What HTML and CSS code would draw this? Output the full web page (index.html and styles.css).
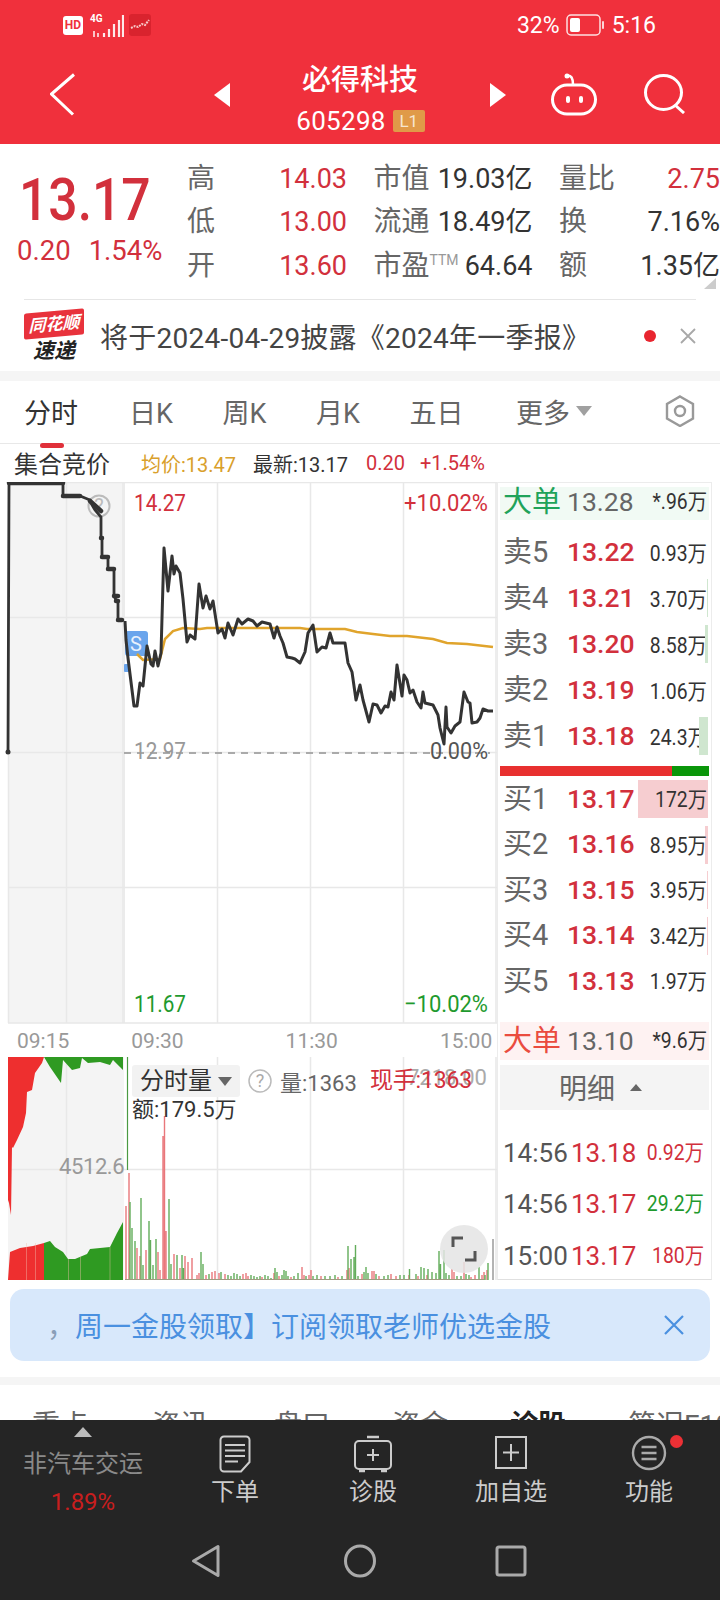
FILE: index.html
```html
<!DOCTYPE html>
<html>
<head>
    <meta charset="utf-8">
    <title>必得科技</title>
    <link rel="stylesheet" href="styles.css">
</head>
<body>
<div class="page">
    <header class="top">
        <div class="status">
            <div class="status-left">
                <span class="hd">HD</span>
                <svg class="signal" width="34" height="24" viewBox="0 0 34 24">
                    <g fill="none" stroke="#fff" stroke-width="2.2" opacity=".9">
                        <path d="M14 24v-4M19 24v-8M24 24v-13M29 24v-17M33 24v-22"/>
                        <path d="M4 18v6M8 20v4" stroke-width="1.6"/>
                    </g>
                </svg>
                <span class="g4">4G</span>
                <svg class="app-mini" width="22" height="22" viewBox="0 0 22 22">
                    <rect width="22" height="22" rx="3" fill="#d9232e"/>
                    <path d="M2 14l4-2 3 1 4-3 3 1 4-5" fill="none" stroke="#f9c9c9" stroke-width="2" stroke-dasharray="2 1"/>
                </svg>
            </div>
            <div class="status-right">
                <span>32%</span>
                <svg width="38" height="22" viewBox="0 0 38 22">
                    <rect x="1" y="1" width="33" height="20" rx="4" fill="none" stroke="#fff" stroke-width="1.5" opacity=".85"/>
                    <rect x="4" y="4" width="10" height="14" rx="2" fill="#fff"/>
                    <rect x="36" y="7" width="2" height="8" rx="1" fill="#fff" opacity=".8"/>
                </svg>
                <span class="clock">5:16</span>
            </div>
        </div>
        <div class="nav">
            <svg class="nav-back" width="26" height="43" viewBox="0 0 26 43">
                <path d="M24 1.500L1.500 21 23 41.500" fill="none" stroke="#fff" stroke-width="3"/>
            </svg>
            <svg class="nav-prev" width="16" height="24" viewBox="0 0 16 24"><path d="M16 0V24L0 12z" fill="#fff"/></svg>
            <div class="nav-title">
                <div class="stock-name">必得科技</div>
                <div class="stock-code">605298<span class="level">L1</span></div>
            </div>
            <svg class="nav-next" width="16" height="24" viewBox="0 0 16 24"><path d="M0 0V24L16 12z" fill="#fff"/></svg>
            <svg class="nav-robot" width="46" height="44" viewBox="0 0 46 44">
                <rect x="1.500" y="13" width="43" height="29" rx="14.500" fill="none" stroke="#fff" stroke-width="3"/>
                <path d="M17 3.500c4 0 5 4 5 9" fill="none" stroke="#fff" stroke-width="2.500"/>
                <circle cx="16" cy="4" r="2.500" fill="#fff"/>
                <rect x="15" y="24" width="4" height="7" rx="2" fill="#fff"/>
                <rect x="28" y="24" width="4" height="7" rx="2" fill="#fff"/>
            </svg>
            <svg class="nav-search" width="42" height="40" viewBox="0 0 42 40">
                <ellipse cx="19.500" cy="18.500" rx="18" ry="17" fill="none" stroke="#fff" stroke-width="3"/>
                <path d="M31 31l9 8" fill="none" stroke="#fff" stroke-width="3"/>
            </svg>
        </div>
    </header>

    <section class="quote">
        <div class="quote-main">
            <div class="last-price">13.17</div>
            <div class="last-change"><span>0.20</span><span>1.54%</span></div>
        </div>
        <div class="stats">
            <div class="stat"><span class="stat-label">高</span><span class="red">14.03</span></div>
            <div class="stat"><span class="stat-label">市值</span><span>19.03亿</span></div>
            <div class="stat"><span class="stat-label">量比</span><span class="red">2.75</span></div>
            <div class="stat"><span class="stat-label">低</span><span class="red">13.00</span></div>
            <div class="stat"><span class="stat-label">流通</span><span>18.49亿</span></div>
            <div class="stat"><span class="stat-label">换</span><span>7.16%</span></div>
            <div class="stat"><span class="stat-label">开</span><span class="red">13.60</span></div>
            <div class="stat"><span class="stat-label">市盈<sup class="ttm">TTM</sup></span><span>64.64</span></div>
            <div class="stat"><span class="stat-label">额</span><span>1.35亿</span></div>
        </div>
        <span class="corner"></span>
    </section>

    <section class="notice">
        <div class="notice-inner">
            <div class="logo">
                <div class="logo-top">同花顺</div>
                <div class="logo-bottom">速递</div>
            </div>
            <div class="notice-text">将于2024-04-29披露《2024年一季报》</div>
            <span class="notice-dot"></span>
            <svg width="16" height="16" viewBox="0 0 16 16"><path d="M1 1l14 14M15 1L1 15" stroke="#a8a8a8" stroke-width="1.800"/></svg>
        </div>
    </section>

    <div class="band"></div>

    <nav class="tabs">
        <span class="tab tab-on">分时</span>
        <span class="tab">日K</span>
        <span class="tab">周K</span>
        <span class="tab">月K</span>
        <span class="tab">五日</span>
        <span class="tab tab-more">更多<i class="caret"></i></span>
        <svg class="tab-set" width="32" height="32" viewBox="0 0 32 32">
            <path d="M16 1.500L29 9V23.500L16 31 3 23.500V9z" fill="none" stroke="#999" stroke-width="2.400"/>
            <circle cx="16" cy="16" r="5" fill="none" stroke="#999" stroke-width="2.400"/>
        </svg>
    </nav>

    <div class="sub-head">
        <span class="auction">集合竞价</span>
        <span class="avg">均价:13.47</span>
        <span class="latest">最新:13.17</span>
        <span class="sub-red sub-chg">0.20</span>
        <span class="sub-red sub-pct">+1.54%</span>
    </div>

    <div class="market">
        <div class="plot">
            <svg class="price-svg" width="497" height="542" viewBox="0 482 497 542">
                <rect x="8" y="482" width="116" height="541" fill="#f4f4f4"/>
                <rect x="122" y="482" width="3" height="541" fill="#ebebeb"/>
                <path d="M8 482.500H497M8 617.500H497M8 752.500H497M8 887.500H497M8 1023H497M66.500 482V1023M217.500 482V1023M310.500 482V1023M403.500 482V1023M496 482V1023M8.500 752V1023" fill="none" stroke="#e8e8e8" stroke-width="1.500"/>
                <path d="M124 753H490" fill="none" stroke="#aaa" stroke-width="2" stroke-dasharray="7 6"/>
                <circle cx="99" cy="506" r="10.500" fill="none" stroke="#bbb" stroke-width="2"/>
                <text class="t-help" x="99" y="513" text-anchor="middle">?</text>
                <rect x="125" y="631" width="23" height="25" rx="3" fill="#6aa5ec"/>
                <rect x="124" y="664" width="5" height="8" rx="1" fill="#6aa5ec"/>
                <text class="t-s" x="136" y="651" text-anchor="middle">S</text>
                <path class="avg-line" d="M137 654L143 660 160 659 165 639 173 631 183 628 200 629 207 628H300L307 629H345L357 632 373 634 390 636H407L433 639 447 643 467 644 493 647"/>
                <path class="step-line" d="M8 752L9 483H63V496H80L85 498 90 500 92 505 95 510 101 517V538H102V557H106L108 558V569H113L114 571V596L116 600 118 601V620H122"/>
                <path class="heavy" d="M9 483H63M63 496H80M90 501l11 10M101 538h1M102 557h6M108 569h6M114 596h4M116 601h2M118 620h4"/>
                <circle cx="8" cy="752" r="2.500" fill="#333"/>
                <path class="price-line" d="M125 621L126 640 128 658 134 706H137L140 683 143 686 147 646 151 664 153 666 155 651 158 666 161 653 164 548 168 591 172 556 174 574 176 566 180 573 183 599 187 642 190 635 195 639 199 584 203 608 206 596 210 609 213 601 218 633 222 629 225 638 228 623 233 635 238 619 242 624 248 619 253 621 257 626 262 622 270 624 274 638 277 627 280 636 283 643 287 657 292 658 295 659 300 663 305 652 308 633 313 625 317 652 322 647 326 648 330 633 333 643H345L348 663 352 672 356 700 360 685 363 700 369 722 373 704 377 705 381 713 385 706 388 707 391 692 394 700 397 665 402 696 404 675 407 680 410 693 413 690 417 702 421 708 423 692 425 703 433 705 438 715 440 728 444 744 446 707 447 727 451 733 455 726 460 722 464 692 468 702 470 703 472 723 477 722 480 718 483 709 488 711H493"/>
                <text class="t-num t-red" x="134" y="511" textLength="52" lengthAdjust="spacingAndGlyphs">14.27</text>
                <text class="t-num t-red" x="404" y="511" textLength="84" lengthAdjust="spacingAndGlyphs">+10.02%</text>
                <text class="t-num t-gray" x="134" y="759" textLength="52" lengthAdjust="spacingAndGlyphs">12.97</text>
                <text class="t-num t-dark" x="430" y="759" textLength="58" lengthAdjust="spacingAndGlyphs">0.00%</text>
                <text class="t-num t-green" x="134" y="1012" textLength="52" lengthAdjust="spacingAndGlyphs">11.67</text>
                <text class="t-num t-green" x="404" y="1012" textLength="84" lengthAdjust="spacingAndGlyphs">−10.02%</text>
            </svg>
            <div class="time-axis">
                <span>09:15</span><span>09:30</span><span>11:30</span><span>15:00</span>
            </div>
            <div class="volume">
                <svg width="497" height="223" viewBox="0 1057 497 223">
                    <rect x="8" y="1057" width="116" height="223" fill="#f4f4f4"/>
                    <path d="M8 1169.500H497M66.500 1057V1280M217.500 1057V1280M310.500 1057V1280M403.500 1057V1280M496 1057V1280" fill="none" stroke="#e8e8e8" stroke-width="1.500"/>
                    <path d="M8 1057H44L42 1063 35 1073 32 1090 27 1092 26 1113 23 1127 17 1140 13 1148 12 1147 11 1215 9 1203 8 1200z" fill="#ee2f2f"/>
                    <path d="M44 1057L50 1067 61 1083 63 1060 72 1070 80 1068 82 1058 88 1063 100 1062 110 1065 113 1060 120 1067 123 1070V1057z" fill="#2f9a22"/>
                    <path d="M8 1280L10 1252 20 1248 33 1246 44 1243V1280z" fill="#ee2f2f"/>
                    <path d="M44 1243L50 1241 55 1247 63 1252 68 1259H75L87 1254 90 1249 110 1247 117 1233 123 1222V1280H44z" fill="#2f9a22"/>
                    <path d="M26.500 1243V1280M35.500 1243V1280M68.500 1259V1280M80.500 1256V1280M110 1247V1280" stroke="#f4c0b0" stroke-width=".6" fill="none" opacity=".7"/>
                    <path d="M127.500 1057V1170" stroke="#4a9a42" stroke-width="1.200"/>
                    <path class="bars-red" d="M126 1280V1206M129 1280V1173M137 1280V1248M140 1280V1256M146 1280V1250M158 1280V1252M160 1280V1270M163 1280V1136M164.500 1280V1116M166 1280V1231M174 1280V1254M180 1280V1268M185 1280V1256M188 1280V1262M192 1280V1258M197 1280V1275M199 1280V1273M206 1280V1275M212 1280V1272M215 1280V1271M219 1280V1273M225 1280V1274M243 1280V1274M246 1280V1273M248 1280V1276M262 1280V1277M274 1280V1273M279 1280V1276M291 1280V1277M302 1280V1267M304 1280V1275M309 1280V1275M311 1280V1270M321 1280V1276M338 1280V1277M347 1280V1270M349 1280V1268M362 1280V1274M372 1280V1271M374 1280V1271M379 1280V1276M391 1280V1274M396 1280V1276M409 1280V1275M418 1280V1276M427 1280V1275M452 1280V1269M454 1280V1272M464 1280V1262M471 1280V1277M475 1280V1275M482 1280V1275M484 1280V1272M487 1280V1270"/>
                    <path class="bars-green" d="M130 1280V1202M132 1280V1228M135 1280V1241M141 1280V1198M143 1280V1265M149 1280V1221M150.500 1280V1240M153 1280V1265M156 1280V1239M169 1280V1199M171 1280V1264M177 1280V1255M182 1280V1255M183.500 1280V1268M201 1280V1252M203 1280V1264M209 1280V1274M221 1280V1272M228 1280V1275M231 1280V1276M234 1280V1273M237 1280V1274M240 1280V1276M251 1280V1275M254 1280V1276M257 1280V1277M260 1280V1276M265 1280V1275M268 1280V1276M271 1280V1278M275 1280V1268M277 1280V1272M282 1280V1275M284 1280V1270M286 1280V1271M288 1280V1276M294 1280V1276M298 1280V1273M306 1280V1276M313 1280V1276M317 1280V1275M325 1280V1276M330 1280V1276M335 1280V1275M342 1280V1276M351 1280V1259M354 1280V1257M355.500 1280V1245M348 1280V1246M358 1280V1276M364 1280V1272M366 1280V1267M368 1280V1273M376 1280V1274M384 1280V1276M388 1280V1275M400 1280V1275M404 1280V1275M409.500 1280V1269M416 1280V1274M421 1280V1267M424 1280V1268M428 1280V1269M432 1280V1272M436 1280V1273M439 1280V1251M440.500 1280V1264M444 1280V1250M446 1280V1273M449 1280V1275M457 1280V1276M461 1280V1276M466 1280V1274M469 1280V1275M479 1280V1267M485 1280V1275M488 1280V1263"/>
                    <path d="M493 1280V1239" stroke="#8a8a8a" stroke-width="1.300"/>
                    <path d="M125 1279.500H484" stroke="#a09a80" stroke-width="1"/>
                </svg>
                <span class="vol-side">4512.6</span>
                <div class="vol-legend">
                    <span class="vol-select">分时量<i class="vol-caret"></i></span>
                    <svg width="24" height="24" viewBox="0 0 24 24">
                        <circle cx="12" cy="12" r="11" fill="none" stroke="#bbb" stroke-width="1.500"/>
                        <text class="t-help2" x="12" y="18" text-anchor="middle">?</text>
                    </svg>
                    <span class="vol-now">量:1363</span>
                </div>
                <span class="vol-max">7218.00</span>
                <span class="vol-hand">现手:1363</span>
                <span class="vol-amount">额:179.5万</span>
                <span class="expand">
                    <svg width="26" height="26" viewBox="0 0 26 26">
                        <path d="M2 11V2H12M24 15V24H14" fill="none" stroke="#555" stroke-width="3"/>
                    </svg>
                </span>
            </div>
        </div>

        <aside class="depth">
            <div class="big big-up"><span class="big-name">大单</span><span class="big-price">13.28</span><span class="d-vol">*.96万</span></div>
            <div class="levels">
                <div class="level-row"><span class="d-name">卖5</span><span class="d-price">13.22</span><span class="d-vol">0.93万</span></div>
                <div class="level-row"><span class="d-name">卖4</span><span class="d-price">13.21</span><span class="d-vol">3.70万</span><i class="d-bar d-bar-sell" style="width:1px"></i></div>
                <div class="level-row"><span class="d-name">卖3</span><span class="d-price">13.20</span><span class="d-vol">8.58万</span><i class="d-bar d-bar-sell" style="width:3px"></i></div>
                <div class="level-row"><span class="d-name">卖2</span><span class="d-price">13.19</span><span class="d-vol">1.06万</span></div>
                <div class="level-row"><span class="d-name">卖1</span><span class="d-price">13.18</span><span class="d-vol">24.3万</span><i class="d-bar d-bar-sell" style="width:9px"></i></div>
            </div>
            <div class="ratio"><i class="ratio-buy" style="width:172px"></i></div>
            <div class="levels">
                <div class="level-row buy-row"><i class="d-bar d-bar-buy" style="width:70px"></i><span class="d-name">买1</span><span class="d-price">13.17</span><span class="d-vol">172万</span></div>
                <div class="level-row buy-row"><i class="d-bar d-bar-buy" style="width:3px"></i><span class="d-name">买2</span><span class="d-price">13.16</span><span class="d-vol">8.95万</span></div>
                <div class="level-row buy-row"><i class="d-bar d-bar-buy" style="width:1px"></i><span class="d-name">买3</span><span class="d-price">13.15</span><span class="d-vol">3.95万</span></div>
                <div class="level-row buy-row"><i class="d-bar d-bar-buy" style="width:1px"></i><span class="d-name">买4</span><span class="d-price">13.14</span><span class="d-vol">3.42万</span></div>
                <div class="level-row buy-row"><span class="d-name">买5</span><span class="d-price">13.13</span><span class="d-vol">1.97万</span></div>
            </div>
            <div class="big big-down"><span class="big-name">大单</span><span class="big-price">13.10</span><span class="d-vol">*9.6万</span></div>
            <div class="detail-head">明细<i class="detail-caret"></i></div>
            <div class="detail-list">
                <div class="detail-row"><span class="dt-time">14:56</span><span class="dt-price">13.18</span><span class="dt-vol">0.92万</span></div>
                <div class="detail-row"><span class="dt-time">14:56</span><span class="dt-price">13.17</span><span class="dt-vol dt-green">29.2万</span></div>
                <div class="detail-row"><span class="dt-time">15:00</span><span class="dt-price">13.17</span><span class="dt-vol">180万</span></div>
            </div>
        </aside>
    </div>

    <section class="promo">
        <div class="promo-text"><span class="promo-fade">，</span>周一金股领取】订阅领取老师优选金股</div>
        <svg width="20" height="20" viewBox="0 0 20 20"><path d="M1 1l18 18M19 1L1 19" stroke="#4a90e0" stroke-width="2.200"/></svg>
    </section>

    <div class="band band-low"></div>

    <nav class="info-tabs">
        <span class="info-a">重点</span>
        <span class="info-b">资讯</span>
        <span class="info-c">盘口</span>
        <span class="info-d">资金</span>
        <span class="info-e">诊股</span>
        <span class="info-f">简况F10</span>
    </nav>

    <footer class="dock">
        <div class="dock-row">
            <div class="dock-sector">
                <i class="sector-up"></i>
                <div class="sector-name">非汽车交运</div>
                <div class="sector-pct">1.89%</div>
            </div>
            <div class="dock-item">
                <svg width="32" height="38" viewBox="0 0 32 38">
                    <path d="M5 1.500H27a3.500 3.500 0 0 1 3.500 3.500V27L22 36.500H5A3.500 3.500 0 0 1 1.500 33V5A3.500 3.500 0 0 1 5 1.500z" fill="none" stroke="#ccc" stroke-width="2"/>
                    <path d="M6 10H26M6 15.500H26M6 21H26M6 26.500H19" stroke="#ccc" stroke-width="2"/>
                </svg>
                <span>下单</span>
            </div>
            <div class="dock-item">
                <svg width="38" height="38" viewBox="0 0 38 38">
                    <rect x="1" y="6" width="36" height="28" rx="4" fill="none" stroke="#ccc" stroke-width="2"/>
                    <path d="M13 2H25M5 36H11M27 36H33" stroke="#ccc" stroke-width="2.500"/>
                    <path d="M19 14V26M13 20H25" stroke="#ccc" stroke-width="2"/>
                </svg>
                <span>诊股</span>
            </div>
            <div class="dock-item">
                <svg width="38" height="38" viewBox="0 0 38 38">
                    <rect x="4" y="2" width="30" height="31" fill="none" stroke="#ccc" stroke-width="2"/>
                    <path d="M19 9V26M11 17.500H27" stroke="#ccc" stroke-width="2"/>
                </svg>
                <span>加自选</span>
            </div>
            <div class="dock-item dock-fn">
                <svg width="38" height="38" viewBox="0 0 38 38">
                    <ellipse cx="19" cy="18" rx="16" ry="16" fill="none" stroke="#aaa" stroke-width="2.400"/>
                    <path d="M11.500 12H26.500M11.500 18H26.500M11.500 24H26.500" stroke="#aaa" stroke-width="2.600"/>
                </svg>
                <span>功能</span>
                <i class="fn-dot"></i>
            </div>
        </div>
        <div class="sys-nav">
            <svg width="30" height="34" viewBox="0 0 30 34"><path d="M27 2.500V31.500L2.500 17z" fill="none" stroke="#aaa" stroke-width="3" stroke-linejoin="round"/></svg>
            <svg class="sys-home" width="32" height="34" viewBox="0 0 32 34"><ellipse cx="16" cy="17" rx="14.500" ry="15" fill="none" stroke="#aaa" stroke-width="3"/></svg>
            <svg width="32" height="32" viewBox="0 0 32 32"><rect x="2" y="2" width="28" height="28" rx="2" fill="none" stroke="#aaa" stroke-width="3"/></svg>
        </div>
    </footer>
</div>
</body>
</html>
```

FILE: styles.css
```css
* {
    box-sizing: border-box;
}

html, body {
    margin: 0;
    padding: 0;
}

body {
    font-family: Roboto, "Noto Sans CJK SC", sans-serif;
    background-color: #fff;
    color: #333;
}

i {
    display: block;
}

.page {
    width: 720px;
    height: 1600px;
    overflow: hidden;
}

.red {
    color: #d2303c;
}

/* header */
.top {
    height: 144px;
    background-color: #f0303c;
    color: #fff;
}

.status {
    height: 50px;
    display: flex;
    align-items: center;
    justify-content: space-between;
    padding: 0 64px 0 63px;
    font-size: 23px;
}

.status-left {
    display: flex;
    align-items: center;
    position: relative;
}

.hd {
    width: 20px;
    height: 19px;
    background-color: #fff;
    color: #f0303c;
    border-radius: 3px;
    font-size: 12px;
    font-weight: 700;
    line-height: 19px;
    text-align: center;
    margin-right: 7px;
}

.g4 {
    position: absolute;
    left: 27px;
    top: 0;
    font-size: 10px;
    font-weight: 700;
    line-height: 12px;
}

.app-mini {
    margin-left: 5px;
}

.status-right {
    display: flex;
    align-items: center;
    gap: 6px;
}

.clock {
    margin-left: 2px;
}

.nav {
    height: 94px;
    display: flex;
    align-items: center;
}

.nav-back {
    margin: -6px 0 0 50px;
}

.nav-prev {
    margin: -4px 0 0 138px;
}

.nav-title {
    width: 260px;
    text-align: center;
    margin-top: 5px;
}

.stock-name {
    font-size: 29px;
    font-weight: 500;
    line-height: 40px;
}

.stock-code {
    font-size: 26px;
    letter-spacing: .3px;
    line-height: 36px;
    margin-top: 3px;
    display: flex;
    align-items: center;
    justify-content: center;
    padding-left: 1px;
}

.level {
    width: 32px;
    height: 22px;
    margin-left: 7px;
    background-color: #e09a48;
    border-radius: 2px;
    font-size: 17px;
    letter-spacing: 0;
    line-height: 22px;
    color: #f7e6d0;
}

.nav-next {
    margin-top: -4px;
}

.nav-robot {
    margin: -6px 0 0 45px;
}

.nav-search {
    margin: -6px 0 0 47px;
}

/* quote */
.quote {
    height: 155px;
    display: flex;
    position: relative;
}

.quote-main {
    width: 187px;
    padding-left: 17px;
}

.last-price {
    font-size: 59px;
    line-height: 60px;
    margin: 26px 0 0 2px;
    color: #d2303c;
    font-weight: 500;
    transform: scaleX(.875);
    transform-origin: left center;
    white-space: nowrap;
}

.last-change {
    display: flex;
    gap: 18px;
    font-size: 27.500px;
    line-height: 34px;
    margin-top: 4px;
    color: #d2303c;
}

.stats {
    display: grid;
    grid-template-columns: 160px 159px 161px;
    grid-auto-rows: 43.5px;
    column-gap: 26.500px;
    padding-top: 13px;
    font-size: 27px;
    white-space: nowrap;
}

.stat {
    display: flex;
    justify-content: space-between;
    align-items: center;
}

.stat span {
    line-height: 32px;
}

.stat-label {
    color: #666;
    font-size: 28px;
}

.ttm {
    font-size: 14px;
    color: #999;
    vertical-align: 10px;
    line-height: 0;
}

.corner {
    position: absolute;
    right: 4px;
    top: 134px;
    width: 0;
    height: 0;
    border-left: 12px solid transparent;
    border-bottom: 11px solid #ccc;
}

/* notice row */
.notice {
    height: 72px;
    padding: 0 24px;
}

.notice-inner {
    height: 72px;
    border-top: 1px solid #e6e6e6;
    display: flex;
    align-items: center;
}

.logo {
    width: 60px;
    text-align: center;
    font-style: italic;
    font-weight: 700;
    margin-top: 3px;
}

.logo-top {
    height: 26px;
    background-color: #e8323c;
    color: #fff;
    font-size: 17px;
    line-height: 26px;
    border-radius: 2px;
    transform: skewY(-5deg);
    white-space: nowrap;
}

.logo-bottom {
    font-size: 21px;
    line-height: 26px;
    color: #222;
    margin-top: 1px;
}

.notice-text {
    flex: 1;
    margin-left: 16px;
    font-size: 28px;
    letter-spacing: .25px;
    color: #444;
    white-space: nowrap;
}

.notice-dot {
    width: 12px;
    height: 12px;
    border-radius: 50%;
    background-color: #e8252f;
    margin-right: 24px;
}

.band {
    height: 10px;
    background-color: #f5f5f5;
}

/* period tabs */
.tabs {
    height: 63px;
    border-bottom: 1px solid #e8e8e8;
    position: relative;
    display: flex;
    align-items: center;
    padding: 0 0 2px 24px;
    font-size: 27px;
    color: #666;
}

.tab {
    width: 93.500px;
    white-space: nowrap;
    padding-left: 0;
}

.tab:first-child {
    width: 105px;
}

.tab-on {
    color: #333;
    position: relative;
}

.tab-on::after {
    content: "";
    position: absolute;
    left: 16px;
    bottom: -17px;
    width: 24px;
    height: 5px;
    border-radius: 3px;
    background-color: #e0303a;
}

.tab-more {
    display: flex;
    align-items: center;
    margin-left: 13px;
}

.caret {
    width: 0;
    height: 0;
    margin-left: 6px;
    border-left: 8px solid transparent;
    border-right: 8px solid transparent;
    border-top: 10px solid #a0a0a0;
}

.tab-set {
    position: absolute;
    left: 664px;
    top: 14px;
}

/* sub heading */
.sub-head {
    height: 38px;
    display: flex;
    align-items: center;
    font-size: 20px;
    white-space: nowrap;
}

.auction {
    font-size: 24px;
    margin: -2px 0 0 14px;
    width: 127px;
}

.avg {
    color: #d9a02b;
    width: 112px;
}

.latest {
    color: #333;
    width: 113px;
}

.sub-red {
    color: #d2303c;
}

.sub-chg {
    width: 54px;
}

/* chart + order book */
.market {
    display: flex;
    height: 798px;
}

.plot {
    width: 497px;
}

.price-svg {
    display: block;
}

.avg-line {
    fill: none;
    stroke: #e0a42c;
    stroke-width: 2.5;
}

.step-line {
    fill: none;
    stroke: #333;
    stroke-width: 2.8;
}

.heavy {
    fill: none;
    stroke: #333;
    stroke-width: 4.5;
    stroke-linecap: round;
}

.price-line {
    fill: none;
    stroke: #333;
    stroke-width: 3;
    stroke-linejoin: round;
}

.t-num {
    font-size: 24px;
}

.t-red {
    fill: #d2303c;
}

.t-green {
    fill: #1f9a2e;
}

.t-gray {
    fill: #999;
}

.t-dark {
    fill: #555;
}

.t-help {
    font-size: 20px;
    fill: #bbb;
}

.t-help2 {
    font-size: 18px;
    fill: #aaa;
}

.t-s {
    font-size: 20px;
    fill: #e8f1fc;
}

.time-axis {
    height: 33px;
    display: flex;
    align-items: center;
    gap: 102px;
    padding-left: 17px;
    font-size: 21px;
    color: #999;
}

.time-axis span:first-child {
    margin-right: -40px;
}

.volume {
    position: relative;
    height: 223px;
}

.volume svg {
    display: block;
}

.bars-red {
    fill: none;
    stroke: #e9777b;
    stroke-width: 1.4;
}

.bars-green {
    fill: none;
    stroke: #63ad5b;
    stroke-width: 1.4;
}

.vol-side {
    position: absolute;
    left: 59px;
    top: 96px;
    font-size: 22px;
    letter-spacing: -.4px;
    line-height: 28px;
    color: #999;
}

.vol-legend {
    position: absolute;
    left: 132px;
    top: 8px;
    display: flex;
    align-items: center;
    gap: 8px;
    font-size: 22px;
    white-space: nowrap;
}

.vol-select {
    width: 108px;
    height: 32px;
    background-color: #f2f2f2;
    border-radius: 3px;
    padding-left: 8px;
    font-size: 24px;
    line-height: 32px;
    color: #333;
    display: flex;
    align-items: center;
}

.vol-caret {
    margin-left: 6px;
    width: 0;
    height: 0;
    border-left: 7px solid transparent;
    border-right: 7px solid transparent;
    border-top: 9px solid #666;
}

.vol-now {
    color: #666;
}

.vol-max {
    position: absolute;
    right: 10px;
    top: 7px;
    font-size: 22px;
    line-height: 27px;
    color: #aaa;
}

.vol-hand {
    position: absolute;
    left: 370px;
    top: 10px;
    font-size: 23px;
    letter-spacing: -.2px;
    line-height: 28px;
    color: #d2303c;
    white-space: nowrap;
}

.vol-amount {
    position: absolute;
    left: 132px;
    top: 39px;
    font-size: 22px;
    line-height: 27px;
    color: #333;
    white-space: nowrap;
}

.expand {
    position: absolute;
    left: 440px;
    top: 168px;
    width: 48px;
    height: 48px;
    border-radius: 50%;
    background-color: rgba(228, 228, 228, .85);
    display: flex;
    align-items: center;
    justify-content: center;
}

/* order book */
.depth {
    width: 215px;
    border: 1px solid #ececec;
    border-bottom-color: #e0e0e0;
    overflow: hidden;
}

.big {
    height: 33px;
    margin: 4px 2px 0 2px;
    display: flex;
    align-items: center;
    padding: 0 0 4px 3px;
    position: relative;
}

.big-up {
    background-color: #f1faf4;
}

.big-up .big-name {
    color: #1fa35a;
}

.big-down {
    height: 38px;
    margin-top: 18.500px;
    padding-bottom: 0;
    background-color: #fef2f2;
}

.big-down .big-name {
    color: #ea4c3f;
}

.big-name {
    font-size: 29px;
    line-height: 32px;
    width: 64px;
}

.big-price {
    font-size: 26.500px;
    line-height: 32px;
    color: #666;
}

.levels {
    margin-top: 9px;
}

.ratio + .levels {
    margin-top: 0;
}

.level-row {
    height: 46px;
    display: flex;
    align-items: center;
    padding-left: 5px;
    position: relative;
}

.buy-row {
    height: 45.500px;
}

.d-name {
    font-size: 29px;
    line-height: 32px;
    width: 64px;
    color: #666;
    position: relative;
}

.d-price {
    font-size: 26.500px;
    font-weight: 500;
    line-height: 32px;
    color: #d2303c;
    position: relative;
}

.d-vol {
    position: absolute;
    right: 4px;
    font-size: 22px;
    line-height: 30px;
    color: #333;
    white-space: nowrap;
    transform: scaleX(.88);
    transform-origin: right center;
}

.level-row .d-vol {
    margin-top: 3px;
}

.big .d-vol {
    right: 2px;
}

.d-bar {
    position: absolute;
    right: 3px;
    top: 4px;
    height: 38px;
}

.d-bar-sell {
    background-color: #cfe6cf;
}

.d-bar-buy {
    background-color: #f6cdd0;
}

.ratio {
    height: 10px;
    margin: 7px 2px 0 2px;
    background-color: #0a960a;
}

.ratio-buy {
    height: 10px;
    background-color: #e8302f;
}

.detail-head {
    height: 45px;
    margin: 5px 2px 0 2px;
    background-color: #f4f4f4;
    font-size: 28px;
    line-height: 45px;
    color: #666;
    display: flex;
    align-items: center;
    padding: 3px 0 0 59px;
}

.detail-caret {
    margin: -3px 0 0 15px;
    width: 0;
    height: 0;
    border-left: 6px solid transparent;
    border-right: 6px solid transparent;
    border-bottom: 7px solid #666;
}

.detail-list {
    padding-top: 17px;
}

.detail-row {
    height: 51.500px;
    display: flex;
    align-items: center;
    padding-left: 5px;
    position: relative;
    font-size: 26px;
    line-height: 32px;
}

.dt-time {
    width: 68px;
    color: #555;
}

.dt-price {
    color: #d2303c;
}

.dt-vol {
    position: absolute;
    right: 7px;
    font-size: 22px;
    color: #d2303c;
    transform: scaleX(.88);
    transform-origin: right center;
}

.dt-green {
    color: #1f9a2e;
}

/* promo */
.promo {
    height: 72px;
    margin: 9px 10px 0 10px;
    background-color: #d8e8fb;
    border-radius: 14px;
    display: flex;
    align-items: center;
    justify-content: space-between;
    padding: 0 26px 0 37px;
    color: #4a90e0;
    font-size: 28px;
    white-space: nowrap;
}

.promo-fade {
    color: #8a9fb8;
}

.band-low {
    margin-top: 16px;
    height: 8px;
}

.info-tabs {
    height: 35px;
    overflow: hidden;
    position: relative;
    font-size: 28px;
    line-height: 34px;
    color: #666;
    display: flex;
}

.info-tabs span {
    position: absolute;
    white-space: nowrap;
    top: 24px;
}

.info-a { left: 32px; }
.info-b { left: 152px; }
.info-c { left: 274px; }
.info-d { left: 392px; }
.info-e { left: 510px; color: #222; font-weight: 700; }
.info-f { left: 628px; }

/* bottom dock */
.dock {
    height: 180px;
    background-color: #252525;
}

.dock-row {
    height: 110px;
    display: flex;
}

.dock-sector {
    width: 166px;
    text-align: center;
    padding-top: 7px;
}

.sector-up {
    width: 0;
    height: 0;
    margin: 0 auto;
    border-left: 9px solid transparent;
    border-right: 9px solid transparent;
    border-bottom: 10px solid #bbb;
}

.sector-name {
    margin-top: 10px;
    font-size: 24px;
    line-height: 34px;
    color: #8a8a8a;
}

.sector-pct {
    margin-top: 4px;
    font-size: 24px;
    line-height: 34px;
    color: #c81e1e;
}

.dock-item {
    width: 138px;
    display: flex;
    flex-direction: column;
    align-items: center;
    padding-top: 15px;
    font-size: 24px;
    line-height: 34px;
    color: #ccc;
    position: relative;
}

.dock-item svg {
    display: block;
    margin-bottom: 2px;
}

.fn-dot {
    position: absolute;
    left: 90px;
    top: 15px;
    width: 13px;
    height: 13px;
    border-radius: 50%;
    background-color: #ec3035;
}

.sys-nav {
    height: 70px;
    display: flex;
    align-items: center;
    gap: 123px;
    padding: 0 0 8px 191px;
}

.sys-home {
    margin-right: -4px;
}
```
